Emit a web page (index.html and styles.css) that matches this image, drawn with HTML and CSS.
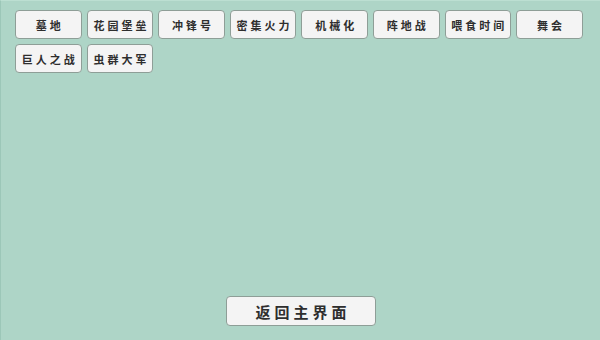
FILE: index.html
```html
<!DOCTYPE html>
<html lang="zh">
<head>
<meta charset="utf-8">
<link rel="stylesheet" href="styles.css">
</head>
<body>
<div class="page">
  <div class="grid">
    <button class="btn">墓地</button>
    <button class="btn">花园堡垒</button>
    <button class="btn">冲锋号</button>
    <button class="btn">密集火力</button>
    <button class="btn">机械化</button>
    <button class="btn">阵地战</button>
    <button class="btn">喂食时间</button>
    <button class="btn">舞会</button>
    <button class="btn">巨人之战</button>
    <button class="btn">虫群大军</button>
  </div>
  <div class="footer">
    <button class="back">返回主界面</button>
  </div>
</div>
</body>
</html>
```
FILE: styles.css
```css
html, body {
  margin: 0;
  padding: 0;
  width: 600px;
  height: 340px;
  overflow: hidden;
  background: #aed5c7;
}
.page {
  box-sizing: border-box;
  height: 340px;
  display: flex;
  flex-direction: column;
  padding: 9px 0 14px 14px;
  border-left: 1px solid #9cc7b8;
  border-top: 1px solid #bcdfd2;
}
.grid {
  display: flex;
  flex-wrap: wrap;
  gap: 5px 5px;
  width: 580px;
}
.btn, .back {
  box-sizing: border-box;
  background: #f4f4f4;
  border: 1px solid #8e9e97;
  border-radius: 4px;
  color: #2e2e2e;
  font-family: "Noto Sans CJK SC", "Noto Sans", sans-serif;
  font-weight: bold;
  padding: 0;
  margin: 0;
  cursor: pointer;
}
.btn {
  width: 66.6px;
  height: 29px;
  font-size: 11px;
  letter-spacing: 3px;
  text-indent: 3px;
}
.footer {
  margin-top: auto;
  display: flex;
  justify-content: center;
  padding-right: 13px;
}
.back {
  width: 150px;
  height: 30px;
  font-size: 15px;
  letter-spacing: 4px;
  text-indent: 4px;
}
```
